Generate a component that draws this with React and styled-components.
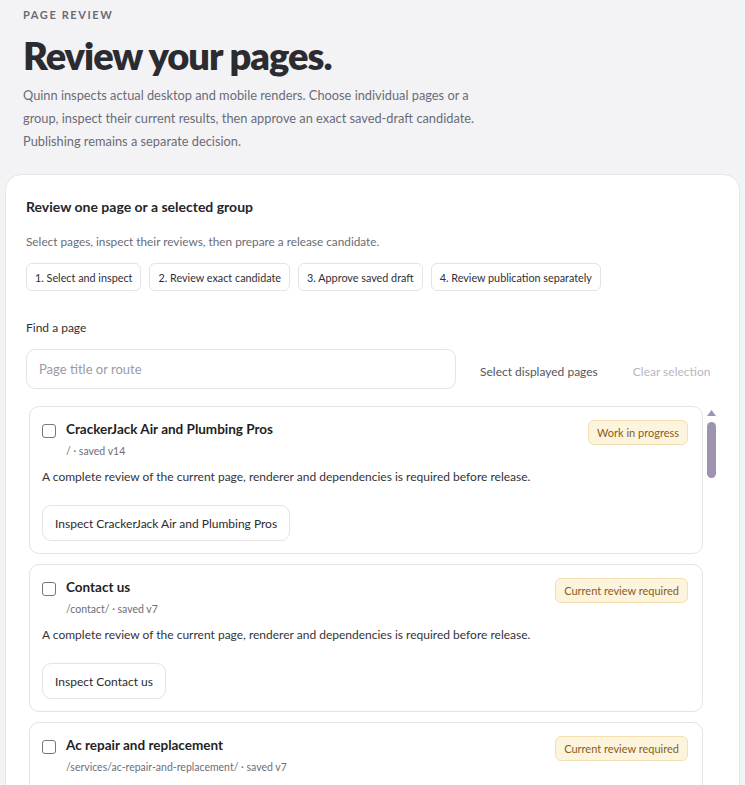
import React, { useLayoutEffect, useRef, useState } from 'react';
import styled, { createGlobalStyle } from 'styled-components';

const GlobalStyle = createGlobalStyle`
	html, body {
		margin: 0;
		padding: 0;
		background: #f3f3f6;
	}
	body {
		font-family: 'Segoe UI', 'Lato', 'Noto Sans', sans-serif;
		color: #2a2a30;
	}
	* {
		box-sizing: border-box;
	}
`;

const Page = styled.div`
	padding: 0 5px;
`;

const Header = styled.header`
	padding: 8px 18px 21px;
`;

const Eyebrow = styled.div`
	font-size: 11px;
	font-weight: 700;
	letter-spacing: 1.6px;
	line-height: 14px;
	color: #6b6b76;
	text-transform: uppercase;
`;

const Title = styled.h1`
	margin: 10px 0 6px;
	font-size: 38px;
	line-height: 46px;
	font-weight: 800;
	letter-spacing: -1px;
	color: #2b2b30;
`;

const Lead = styled.p`
	margin: 0;
	max-width: 462px;
	font-size: 12.8px;
	line-height: 23px;
	color: #6b6b76;
`;

const Panel = styled.section`
	background: #fff;
	border: 1px solid #e6e6eb;
	border-radius: 16px;
	padding: 23px 20px 0 20px;
`;

const PanelTitle = styled.h2`
	margin: 0;
	font-size: 14px;
	line-height: 17px;
	font-weight: 700;
	color: #25252a;
`;

const PanelHint = styled.p`
	margin: 19px 0 13px;
	font-size: 11.8px;
	line-height: 16px;
	color: #6b6b76;
`;

const Steps = styled.div`
	display: flex;
	flex-wrap: wrap;
	gap: 8px;
`;

const Step = styled.span`
	display: inline-flex;
	align-items: center;
	height: 28px;
	padding: 0 8px;
	border: 1px solid #e3e3e8;
	border-radius: 6px;
	font-size: 10.8px;
	color: #2f2f35;
`;

const FieldLabel = styled.label`
	display: block;
	margin: 29px 0 13px;
	font-size: 12px;
	line-height: 16px;
	color: #2f2f35;
`;

const SearchRow = styled.div`
	display: flex;
	align-items: center;
	gap: 24px;
`;

const SearchInput = styled.input`
	width: 430px;
	height: 40px;
	padding: 0 12px;
	border: 1px solid #e3e3e8;
	border-radius: 9px;
	font: inherit;
	font-size: 13px;
	color: #2a2a30;
	outline: none;
	&::placeholder {
		color: #9b9ba6;
	}
`;

const TextButton = styled.button`
	border: 0;
	background: none;
	padding: 0;
	font: inherit;
	font-size: 12px;
	color: ${(props) => (props.disabled ? '#b7b7bf' : '#55555d')};
	cursor: ${(props) => (props.disabled ? 'default' : 'pointer')};
	& + & {
		margin-left: 35px;
	}
`;

const ListFrame = styled.div`
	display: grid;
	grid-template-columns: 1fr 14px;
	gap: 2px;
	margin-top: 13px;
	height: 560px;
`;

const List = styled.div`
	display: flex;
	flex-direction: column;
	gap: 10px;
	overflow-y: auto;
	scrollbar-width: none;
	padding: 4px 0 4px 3px;
	&::-webkit-scrollbar {
		display: none;
	}
`;

const ScrollTrack = styled.div`
	display: flex;
	flex-direction: column;
	align-items: center;
	padding: 8px 2px 0 1px;
`;

const ScrollArrow = styled.svg`
	flex: none;
	display: block;
	margin-bottom: 6px;
`;

const ThumbRail = styled.div`
	position: relative;
	flex: 1;
	width: 9px;
`;

const Thumb = styled.div`
	position: absolute;
	left: 0;
	width: 9px;
	border-radius: 5px;
	background: #9e94b0;
`;

const Item = styled.article`
	flex: none;
	border: 1px solid #e3e3e8;
	border-radius: 10px;
	padding: 13px 14px 12px 12px;
`;

const ItemHead = styled.div`
	display: flex;
	align-items: flex-start;
	justify-content: space-between;
	gap: 12px;
`;

const ItemMain = styled.div`
	display: flex;
	align-items: flex-start;
	gap: 10px;
	padding-top: 1px;
`;

const Check = styled.input.attrs({ type: 'checkbox' })`
	appearance: none;
	margin: 3px 0 0;
	width: 14px;
	height: 14px;
	border: 1px solid #76767e;
	border-radius: 3px;
	background: #fff;
	flex: none;
	&:checked {
		background: #5b4e7a;
		border-color: #5b4e7a;
	}
`;

const ItemTitle = styled.div`
	font-size: 13.5px;
	line-height: 17px;
	font-weight: 700;
	color: #1f1f24;
`;

const ItemMeta = styled.div`
	margin-top: 6px;
	font-size: 10.5px;
	line-height: 14px;
	color: #6e6e78;
`;

const Badge = styled.span`
	flex: none;
	display: inline-flex;
	align-items: center;
	height: 25px;
	padding: 0 8px;
	border: 1px solid #f3dfb0;
	border-radius: 6px;
	background: #fdf4de;
	font-size: 11px;
	color: #8a5b1c;
`;

const ItemText = styled.p`
	margin: 11px 0 20px;
	font-size: 12px;
	line-height: 16px;
	color: #33333a;
`;

const InspectButton = styled.button`
	height: 36px;
	padding: 0 12px;
	border: 1px solid #e3e3e8;
	border-radius: 9px;
	background: #fff;
	font: inherit;
	font-size: 12px;
	color: #2a2a30;
	cursor: pointer;
`;

const steps = [
	'1. Select and inspect',
	'2. Review exact candidate',
	'3. Approve saved draft',
	'4. Review publication separately',
];

const required = 'Current review required';
const note = 'A complete review of the current page, renderer and dependencies is required before release.';

const slug = (t) => t.toLowerCase().replace(/[^a-z0-9]+/g, '-');

const services = [
	'Ac repair and replacement',
	'Furnace repair',
	'Water heater installation',
	'Drain cleaning',
	'Leak detection',
	'Heat pump service',
	'Indoor air quality',
	'Sewer line repair',
	'Ductless mini splits',
	'Emergency plumbing',
	'Boiler repair',
	'Thermostat installation',
	'Duct cleaning',
	'Gas line repair',
	'Sump pump installation',
	'Water filtration',
	'Toilet repair',
	'Faucet installation',
	'Garbage disposal repair',
	'Repiping',
	'Hydro jetting',
	'Tankless water heaters',
	'Commercial plumbing',
	'Commercial hvac',
];

const pages = [
	{ title: 'CrackerJack Air and Plumbing Pros', route: '/', version: 14, status: 'Work in progress' },
	{ title: 'Contact us', route: '/contact/', version: 7, status: required },
	...services.map((t, i) => ({
		title: t,
		route: `/services/${slug(t)}/`,
		version: Math.max(7 - Math.floor(i / 4), 2),
		status: required,
	})),
	{ title: 'Service areas', route: '/service-areas/', version: 3, status: required },
	{ title: 'About us', route: '/about/', version: 3, status: required },
	{ title: 'Reviews', route: '/reviews/', version: 2, status: required },
	{ title: 'Financing', route: '/financing/', version: 2, status: required },
	{ title: 'Maintenance plans', route: '/maintenance-plans/', version: 2, status: required },
	{ title: 'Careers', route: '/careers/', version: 2, status: required },
	{ title: 'Blog', route: '/blog/', version: 2, status: required },
	{ title: 'Privacy policy', route: '/privacy-policy/', version: 1, status: required },
];

export default function App() {
	const [query, setQuery] = useState('');
	const [selected, setSelected] = useState([]);
	const [bar, setBar] = useState({ top: 0, size: 0.105 });
	const listRef = useRef(null);

	const shown = pages.filter((p) =>
		(p.title + ' ' + p.route).toLowerCase().includes(query.trim().toLowerCase())
	);

	const measure = () => {
		const el = listRef.current;
		if (!el) return;
		const size = Math.min(1, el.clientHeight / el.scrollHeight);
		const range = el.scrollHeight - el.clientHeight;
		setBar({ size, top: range > 0 ? (el.scrollTop / range) * (1 - size) : 0 });
	};

	useLayoutEffect(measure, [shown.length]);

	const toggle = (route) =>
		setSelected((cur) => (cur.includes(route) ? cur.filter((r) => r !== route) : [...cur, route]));

	return (
		<Page>
			<GlobalStyle />
			<Header>
				<Eyebrow>Page review</Eyebrow>
				<Title>Review your pages.</Title>
				<Lead>
					Quinn inspects actual desktop and mobile renders. Choose individual pages or a group, inspect their
					current results, then approve an exact saved-draft candidate. Publishing remains a separate decision.
				</Lead>
			</Header>

			<Panel>
				<PanelTitle>Review one page or a selected group</PanelTitle>
				<PanelHint>Select pages, inspect their reviews, then prepare a release candidate.</PanelHint>
				<Steps>
					{steps.map((s) => (
						<Step key={s}>{s}</Step>
					))}
				</Steps>

				<FieldLabel htmlFor="find-page">Find a page</FieldLabel>
				<SearchRow>
					<SearchInput
						id="find-page"
						placeholder="Page title or route"
						value={query}
						onChange={(e) => setQuery(e.target.value)}
					/>
					<div>
						<TextButton onClick={() => setSelected(shown.map((p) => p.route))}>Select displayed pages</TextButton>
						<TextButton disabled={!selected.length} onClick={() => setSelected([])}>
							Clear selection
						</TextButton>
					</div>
				</SearchRow>

				<ListFrame>
					<List ref={listRef} onScroll={measure}>
						{shown.map((p) => (
							<Item key={p.route}>
								<ItemHead>
									<ItemMain>
										<Check checked={selected.includes(p.route)} onChange={() => toggle(p.route)} />
										<div>
											<ItemTitle>{p.title}</ItemTitle>
											<ItemMeta>
												{p.route} · saved v{p.version}
											</ItemMeta>
										</div>
									</ItemMain>
									<Badge>{p.status}</Badge>
								</ItemHead>
								<ItemText>{note}</ItemText>
								<InspectButton>Inspect {p.title}</InspectButton>
							</Item>
						))}
					</List>
					<ScrollTrack>
						<ScrollArrow width="9" height="6" viewBox="0 0 9 6">
							<path d="M4.5 0 9 6H0z" fill="#9e94b0" />
						</ScrollArrow>
						<ThumbRail>
							<Thumb style={{ top: `${bar.top * 100}%`, height: `${bar.size * 100}%` }} />
						</ThumbRail>
					</ScrollTrack>
				</ListFrame>
			</Panel>
		</Page>
	);
}
